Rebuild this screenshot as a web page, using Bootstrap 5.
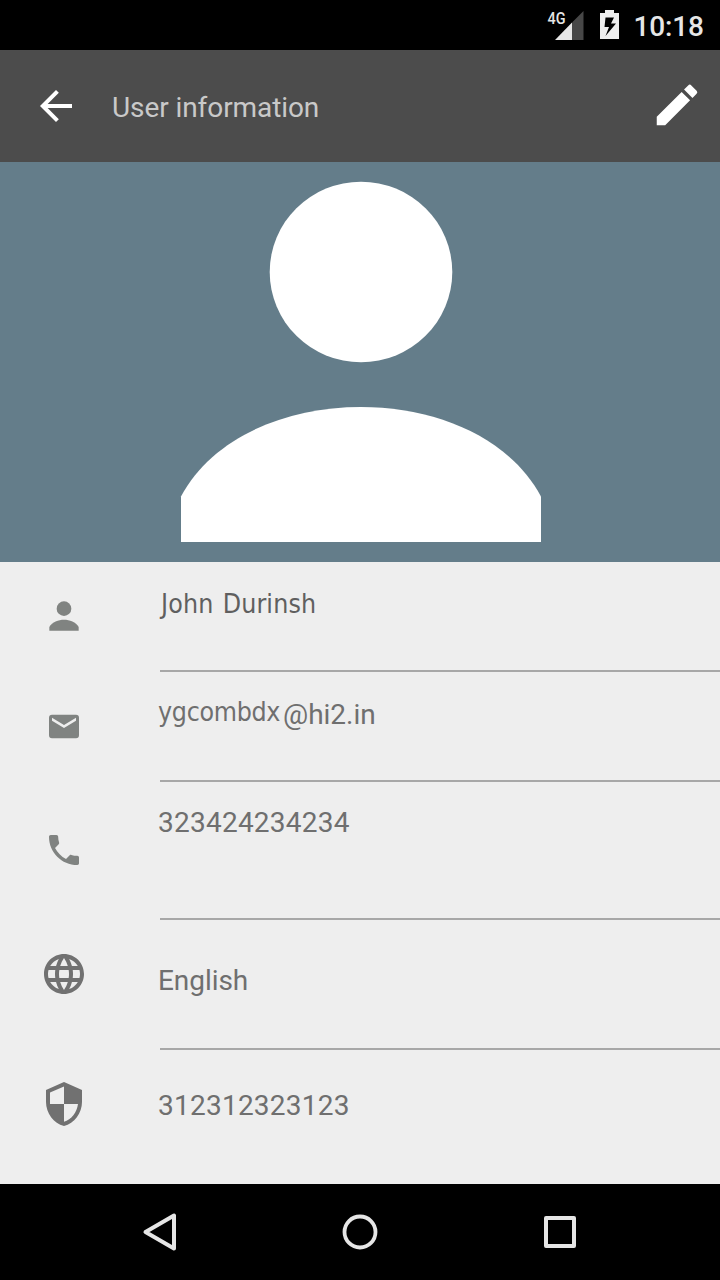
<!DOCTYPE html>
<html lang="en">
<head>
<meta charset="utf-8">
<meta name="viewport" content="width=device-width, initial-scale=1">
<title>User information</title>
<link rel="stylesheet" href="https://cdn.jsdelivr.net/npm/bootstrap@5.3.0/dist/css/bootstrap.min.css">
<style>
  body { width: 720px; height: 1280px; background: #eee; font-family: Roboto, sans-serif; font-size: 28px; line-height: 32px; color: #6f6f6f; overflow: hidden; }
  svg { display: block; flex: none; }
  .status-bar { height: 50px; background: #000; color: #e6e6e6; padding-right: 16px; }
  .app-bar { height: 112px; background: #4c4c4c; color: #c9c9c9; padding: 0 16px 0 32px; }
  .app-title { font-size: 28px; line-height: 32px; padding-top: 4px; margin-left: 32px; font-weight: 400; letter-spacing: -.08px; }
  .edit-icon { margin-bottom: 2px; }
  .avatar { height: 400px; background: #647d8a; }
  .icon-cell { width: 128px; height: 108px; color: #808381; }
  .icon-tall { height: 136px; }
  .icon-dark { color: #717171; }
  .field { margin-left: 32px; border-bottom: 2px solid #a7a7a7; white-space: nowrap; }
  .field span { display: inline-block; }
  .alt-face { font-family: "DejaVu Sans Condensed", "DejaVu Sans", sans-serif; font-stretch: condensed; font-size: 26.5px; }
  .h-a { height: 110px; } .h-b { height: 138px; } .h-c { height: 130px; } .h-d { height: 134px; }
  .name { padding-top: 26px; padding-left: 1px; color: #5f5f5f; letter-spacing: .15px; word-spacing: 1.5px; }
  .mail { padding-top: 24px; }
  .mail-user { width: 125px; margin-left: -2px; letter-spacing: -.3px; }
  .mail-host { padding-top: 3px; }
  .phone { padding-top: 25px; } .lang { padding-top: 45px; } .ident { padding-top: 40px; border: 0; }
  .digits { margin-left: -2px; letter-spacing: .24px; }
  .lang .digits { letter-spacing: -.05px; }
  .nav-keys { height: 96px; background: #000; padding: 0 60px; }
</style>
</head>
<body class="d-flex flex-column">
  <div class="status-bar d-flex justify-content-end align-items-center">
    <svg width="160" height="50" viewBox="544 0 160 50">
      <text x="547.5" y="23.5" font-family="Roboto" font-size="16.5" font-weight="500" textLength="18" lengthAdjust="spacingAndGlyphs" fill="#e6e6e6">4G</text>
      <path d="M572 22.5L583.5 11v29H572z" fill="#474747"/>
      <path d="M555 40l17-17.5V40z" fill="#e6e6e6"/>
      <path fill-rule="evenodd" d="M600 13h5v-3h9v3h5v26h-19zM605.500 17.500L604.500 27h4.500l-3.500 9 10.500-12.500h-5l3-6z" fill="#eee"/>
      <text x="633.5" y="35.500" font-family="Roboto" font-size="28" font-weight="500" textLength="70.500" lengthAdjust="spacing" fill="#e6e6e6">10:18</text>
    </svg>
  </div>
  <header class="app-bar d-flex align-items-center">
    <svg width="48" height="48" viewBox="0 0 24 24" fill="#fff"><path d="M20 11H7.830l5.590-5.590L12 4l-8 8 8 8 1.410-1.410L7.830 13H20v-2z"/></svg>
    <h1 class="app-title mb-0">User information</h1>
    <svg class="edit-icon ms-auto" width="54" height="54" viewBox="0 0 24 24" fill="#fff"><path d="M3 17.250V21h3.750L17.810 9.940l-3.750-3.750L3 17.250zM20.710 7.040a1 1 0 0 0 0-1.410l-2.340-2.340a1 1 0 0 0-1.410 0l-1.830 1.830 3.750 3.750 1.830-1.830z"/></svg>
  </header>
  <div class="avatar d-flex justify-content-center align-items-center">
    <svg width="362" height="362" viewBox="179 181 362 362" fill="#fff"><ellipse cx="361" cy="272" rx="91.300" ry="90.300"/><path d="M181 496.500C212 438 285 407 361 407S510 438 541 496.500V542H181z"/></svg>
  </div>
  <main>
    <div class="d-flex h-a">
      <div class="icon-cell d-flex justify-content-center align-items-center"><svg width="44" height="44" viewBox="0 0 24 24" fill="currentColor"><circle cx="12" cy="8" r="4"/><path d="M4 18C5.500 15.300 9 14 12 14s6.500 1.300 8 4v2H4z"/></svg></div>
      <div class="field name flex-grow-1"><span class="alt-face">John Durinsh</span></div>
    </div>
    <div class="d-flex h-a">
      <div class="icon-cell d-flex justify-content-center align-items-center"><svg width="36" height="35" viewBox="0 0 24 24" preserveAspectRatio="none" fill="currentColor"><path d="M20 4H4a2 2 0 0 0-2 2v12a2 2 0 0 0 2 2h16a2 2 0 0 0 2-2V6a2 2 0 0 0-2-2zm0 4l-8 5-8-5V6l8 5 8-5v2z"/></svg></div>
      <div class="field mail flex-grow-1 d-flex"><span class="alt-face mail-user">ygcombdx</span><span class="mail-host">@hi2.in</span></div>
    </div>
    <div class="d-flex h-b">
      <div class="icon-cell icon-tall d-flex justify-content-center align-items-center"><svg width="40" height="40" viewBox="0 0 24 24" fill="currentColor"><path d="M6.620 10.790c1.440 2.830 3.760 5.140 6.590 6.590l2.200-2.200c.27-.27.67-.36 1.020-.24 1.120.37 2.330.57 3.570.57.55 0 1 .45 1 1V20c0 .55-.45 1-1 1C10.610 21 3 13.390 3 4c0-.55.45-1 1-1h3.500c.55 0 1 .45 1 1 0 1.250.2 2.450.57 3.570.11.35.03.74-.25 1.020l-2.200 2.200z"/></svg></div>
      <div class="field phone flex-grow-1"><span class="digits">323424234234</span></div>
    </div>
    <div class="d-flex h-c">
      <div class="icon-cell icon-dark d-flex justify-content-center align-items-center"><svg width="48" height="48" viewBox="0 0 24 24" fill="currentColor"><path d="M11.990 2C6.470 2 2 6.480 2 12s4.470 10 9.990 10C17.520 22 22 17.520 22 12S17.520 2 11.990 2zm6.930 6h-2.950a15.650 15.650 0 0 0-1.380-3.560A8.030 8.030 0 0 1 18.920 8zM12 4.040c.83 1.200 1.480 2.530 1.910 3.960h-3.820c.43-1.430 1.080-2.760 1.910-3.960zM4.260 14C4.100 13.360 4 12.690 4 12s.1-1.360.26-2h3.380c-.08.66-.14 1.320-.14 2s.06 1.340.14 2H4.260zm.82 2h2.950c.32 1.250.78 2.450 1.380 3.560A7.990 7.990 0 0 1 5.080 16zm2.950-8H5.080a7.990 7.990 0 0 1 4.330-3.560A15.650 15.650 0 0 0 8.030 8zM12 19.960c-.83-1.200-1.480-2.530-1.910-3.960h3.820c-.43 1.430-1.080 2.760-1.910 3.960zM14.340 14H9.660c-.09-.66-.16-1.320-.16-2s.07-1.350.16-2h4.680c.09.65.16 1.320.16 2s-.07 1.340-.16 2zm.25 5.560c.6-1.110 1.060-2.310 1.380-3.560h2.950a8.030 8.030 0 0 1-4.330 3.560zM16.360 14c.08-.66.14-1.320.14-2s-.06-1.340-.14-2h3.380c.16.64.26 1.310.26 2s-.1 1.360-.26 2h-3.380z"/></svg></div>
      <div class="field lang flex-grow-1"><span class="digits">English</span></div>
    </div>
    <div class="d-flex h-d">
      <div class="icon-cell icon-dark d-flex justify-content-center align-items-center"><svg width="48" height="48" viewBox="0 0 24 24" fill="currentColor"><path d="M12 1L3 5v6c0 5.550 3.840 10.740 9 12 5.160-1.260 9-6.450 9-12V5l-9-4zm0 10.990h7c-.53 4.120-3.280 7.790-7 8.940V12H5V6.300l7-3.110v8.800z"/></svg></div>
      <div class="field ident flex-grow-1"><span class="digits">312312323123</span></div>
    </div>
  </main>
  <nav class="nav-keys d-flex" aria-label="System">
    <svg width="200" height="96" viewBox="60 0 200 96" fill="none" stroke="#e6e6e6" stroke-width="4" stroke-linejoin="round"><path d="M145.500 48L174 31.500v33z"/></svg>
    <svg width="200" height="96" viewBox="260 0 200 96" fill="none" stroke="#e6e6e6" stroke-width="3.800"><circle cx="360" cy="48" r="15.500"/></svg>
    <svg width="200" height="96" viewBox="460 0 200 96" fill="none" stroke="#e6e6e6" stroke-width="4" stroke-linejoin="round"><path d="M546 34h28v28h-28z"/></svg>
  </nav>
<script src="https://cdn.jsdelivr.net/npm/bootstrap@5.3.0/dist/js/bootstrap.bundle.min.js"></script>
</body>
</html>
